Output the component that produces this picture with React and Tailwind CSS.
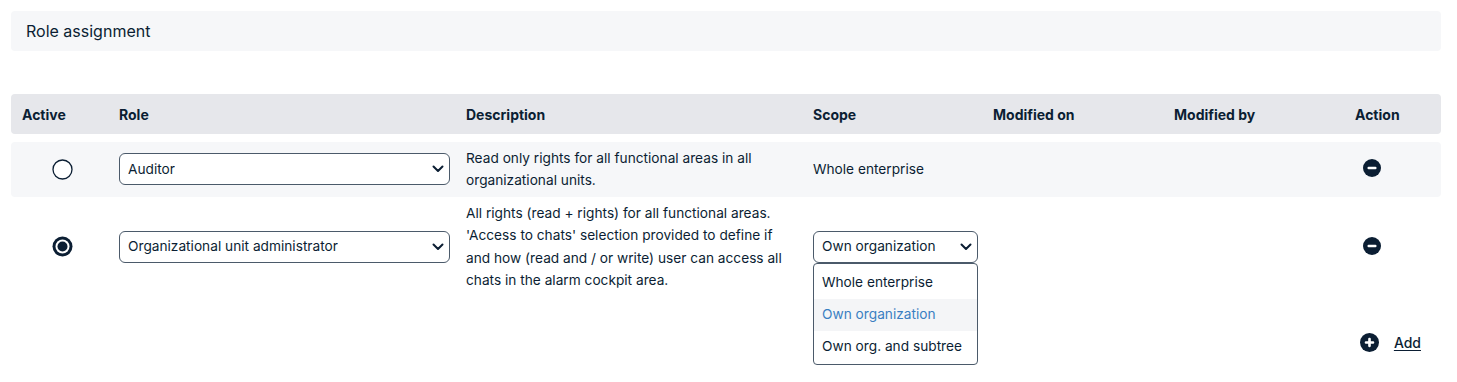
import { useState } from 'react';

const COLS = 'grid grid-cols-[97px_347px_347px_180px_181px_181px_1fr] px-[11px]';

const ROLES = [
  {
    id: 1,
    active: false,
    role: 'Auditor',
    description: 'Read only rights for all functional areas in all organizational units.',
    scope: 'Whole enterprise',
    editable: false,
  },
  {
    id: 2,
    active: true,
    role: 'Organizational unit administrator',
    description:
      "All rights (read + rights) for all functional areas. 'Access to chats' selection provided to define if and how (read and / or write) user can access all chats in the alarm cockpit area.",
    scope: 'Own organization',
    editable: true,
  },
];

const SCOPES = ['Whole enterprise', 'Own organization', 'Own org. and subtree'];

function Chevron() {
  return (
    <svg width="12" height="8" viewBox="0 0 12 8" fill="none" className="shrink-0">
      <path d="M1.5 1.5 6 6l4.5-4.5" stroke="#0b1e33" strokeWidth="2" strokeLinecap="round" strokeLinejoin="round" />
    </svg>
  );
}

function Radio({ checked }) {
  return (
    <svg width="21" height="21" viewBox="0 0 21 21">
      {checked ? (
        <>
          <circle cx="10.5" cy="10.5" r="10" fill="#0b1e33" />
          <circle cx="10.5" cy="10.5" r="7" fill="#fff" />
          <circle cx="10.5" cy="10.5" r="5" fill="#0b1e33" />
        </>
      ) : (
        <circle cx="10.5" cy="10.5" r="9.5" fill="#fff" stroke="#0b1e33" strokeWidth="1.3" />
      )}
    </svg>
  );
}

function CircleIcon({ plus, size = 18 }) {
  return (
    <svg width={size} height={size} viewBox="0 0 20 20">
      <circle cx="10" cy="10" r="10" fill="#0b1e33" />
      <rect x="5" y="8.6" width="10" height="2.8" rx="1.2" fill="#fff" />
      {plus && <rect x="8.6" y="5" width="2.8" height="10" rx="1.2" fill="#fff" />}
    </svg>
  );
}

function Select({ value, className = '' }) {
  return (
    <div
      className={`flex h-[32px] items-center justify-between rounded-[6px] border border-[#4b5a6a] bg-white pl-[8px] pr-[5px] text-[13.7px] text-[#0b1e33] ${className}`}
    >
      <span className="truncate">{value}</span>
      <Chevron />
    </div>
  );
}

export default function App() {
  const [open] = useState(true);

  return (
    <div className="min-h-[382px] bg-white pl-[11px] pr-[16px] pt-[11px] font-['Inter','Liberation_Sans',sans-serif] text-[#0b1e33]">
      <div className="flex h-[40px] items-center rounded-[4px] bg-[#f6f7f9] px-[15px] text-[16px]">
        Role assignment
      </div>

      <div className={`${COLS} mt-[43px] h-[40px] items-center rounded-[4px] bg-[#e6e7eb] text-[14px] font-bold`}>
        <div>Active</div>
        <div>Role</div>
        <div>Description</div>
        <div>Scope</div>
        <div>Modified on</div>
        <div>Modified by</div>
        <div>Action</div>
      </div>

      <div className="mt-[8px] flex flex-col">
        {ROLES.map((r, i) => (
          <div
            key={r.id}
            className={`${COLS} items-center rounded-[4px] py-[5px] text-[13.7px] leading-[22.4px] ${i % 2 === 0 ? 'bg-[#f6f7f9]' : 'bg-white'}`}
          >
            <div className="flex pl-[30px]">
              <Radio checked={r.active} />
            </div>
            <div className="pr-[16px]">
              <Select value={r.role} />
            </div>
            <div className="pr-[20px]">{r.description}</div>
            <div>
              {r.editable ? (
                <div className="relative w-[165px]">
                  <Select value={r.scope} />
                  {open && (
                    <div className="absolute left-0 top-[32px] z-10 w-[165px] overflow-hidden rounded-[4px] border border-[#4b5a6a] bg-white pb-[1px] pt-[3px]">
                      {SCOPES.map((s) => (
                        <div
                          key={s}
                          className={`flex h-[32px] items-center px-[8px] ${s === r.scope ? 'bg-[#f4f5f7] text-[#3a7fc2]' : ''}`}
                        >
                          {s}
                        </div>
                      ))}
                    </div>
                  )}
                </div>
              ) : (
                r.scope
              )}
            </div>
            <div />
            <div />
            <div className="flex -translate-y-px pl-[8px]">
              <CircleIcon />
            </div>
          </div>
        ))}
      </div>

      <div className="mt-[30px] flex h-[32px] items-center justify-end gap-[15px] pr-[20px] text-[14px]">
        <CircleIcon plus size={19} />
        <span className="font-medium underline underline-offset-2">Add</span>
      </div>
    </div>
  );
}
